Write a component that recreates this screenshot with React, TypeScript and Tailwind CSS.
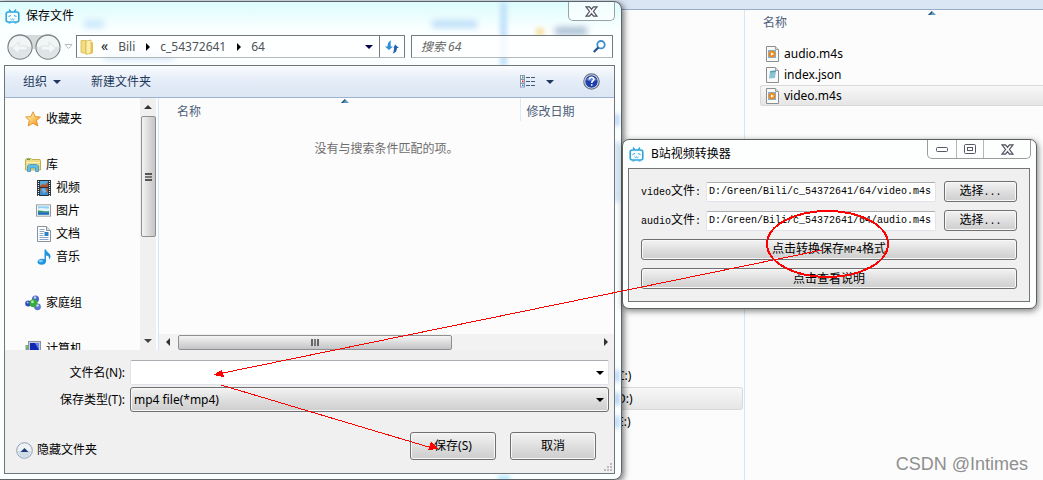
import React from "react";

interface NavItem {
  label: string;
  icon: React.ReactNode;
  child?: boolean;
  spaced?: boolean;
}

interface FileRow {
  name: string;
  kind: "media" | "json";
  selected?: boolean;
}

const TvIcon = () => (
  <svg width="15" height="15" viewBox="0 0 15 15" fill="none" stroke="#2fa5dc" aria-hidden="true">
    <path d="M4 0.5 6 3M11 0.5 9 3" strokeWidth="1.4" />
    <rect x="1.2" y="3" width="12.6" height="10" rx="2" strokeWidth="1.6" fill="#f4fcff" />
    <path d="M3.5 7.5 6 6.5M9 6.5l2.500 1M5.500 10l1 .8 1-.8 1 .8 1-.8M3.500 14h2M9.500 14h2" strokeWidth="1" />
  </svg>
);

const StarIcon = () => (
  <svg width="16" height="16" viewBox="0 0 16 16" aria-hidden="true">
    <defs>
      <linearGradient id="star" x1="0" y1="0" x2="1" y2="1">
        <stop offset="0.2" stopColor="#fff0a0" />
        <stop offset="1" stopColor="#f08a10" />
      </linearGradient>
    </defs>
    <path
      d="M8 .8 10.200 5.600 15.400 6 11.500 9.600 12.800 15 8 12.200 3.200 15 4.300 9.600.6 6l5.200-.4z"
      fill="url(#star)"
      stroke="#e68a28"
      strokeWidth="0.9"
    />
  </svg>
);

const LibraryIcon = () => (
  <svg width="16" height="16" viewBox="0 0 16 16" aria-hidden="true">
    <path d="M.5 13V2.500L2 1.500h4l1 1h8l.5 1V13z" fill="#eedc84" stroke="#c5ad4c" />
    <path d="M1 5.500h14" stroke="#fbf3b8" />
    <path d="M2.500 14.500V9l2-1.500h7l2 1.500v5.500h-3V11h-5v3.500z" fill="#62bce8" stroke="#3d93c4" strokeWidth="0.8" />
    <path d="M2 2.500h3" stroke="#4ca44a" />
  </svg>
);

const FilmIcon = () => (
  <svg width="14" height="16" viewBox="0 0 14 16" aria-hidden="true">
    <rect width="14" height="16" fill="#2a3136" />
    <rect x="3" y="1" width="8" height="6" fill="#57a8dc" />
    <rect x="3" y="8" width="8" height="7" fill="#3c8fd0" />
    <path d="m3 6 3-2 2 1 3-3v5H3zM3 8l4 2 4-2v4l-3 1-5-3z" fill="#b5502f" />
    <path d="M4 9.500 7 8l3 3-3 2.500z" fill="#63b9ee" />
    <path d="M1.500 1v15M12.500 1v15" stroke="#e3f2f2" strokeWidth="1.2" strokeDasharray="1 1" />
  </svg>
);

const PictureIcon = () => (
  <svg width="16" height="13" viewBox="0 0 16 13" aria-hidden="true">
    <rect x=".5" y=".5" width="15" height="12" fill="#fff" stroke="#8d969b" />
    <rect x="2" y="2" width="12" height="9" fill="#8fd0f3" />
    <path d="M2 4.500c4-2 8 1 12-.5v3H2z" fill="#e4f6fb" />
    <path d="M2 6.500c4-.5 8 2 12 .5V8.500H2z" fill="#3e9262" />
    <path d="M2 8.500h12V11H2z" fill="#1f6bb5" />
  </svg>
);

const DocumentIcon = () => (
  <svg width="14" height="16" viewBox="0 0 14 16" aria-hidden="true">
    <path d="M.5.5h9l4 4v11H.5z" fill="#fff" stroke="#8a9299" />
    <path d="M9.500.5v4h4" fill="#dfe6ea" stroke="#8a9299" />
    <path d="M2.500 3.500h5M2.500 5.500h5M2.500 7.500h4M2.500 9.500h4M2.500 11.500h9M2.500 13.500h9" stroke="#8ba6c9" />
    <rect x="7.500" y="6" width="4" height="4" fill="#2e7fc2" />
  </svg>
);

const MusicIcon = () => (
  <svg width="14" height="16" viewBox="0 0 14 16" aria-hidden="true">
    <path d="M7.500.5h1.500c.5 3 4.500 3.500 4.500 7 0 1.500-.8 2.500-1.500 3 .5-3-1-3.800-3-4v6c0 2-2 3.300-4.300 3.300C2 15.800.5 14.600.5 13c0-2 2-3.300 4.500-3.300 1 0 2 .2 2.500.5z" fill="#2196dc" />
    <ellipse cx="3.800" cy="12" rx="2" ry="1.200" fill="#7fd0f8" />
  </svg>
);

const HomegroupIcon = () => (
  <svg width="16" height="16" viewBox="0 0 16 16" aria-hidden="true">
    <circle cx="10.500" cy="4" r="3.500" fill="#4a66c4" />
    <circle cx="3.200" cy="8.500" r="3" fill="#2f4cb4" />
    <circle cx="12.500" cy="11.800" r="3.400" fill="#5a76cc" />
    <circle cx="8.500" cy="8.300" r="4" fill="#35a93c" />
    <circle cx="10" cy="2.600" r="1.300" fill="#b8c8f4" />
    <circle cx="7.500" cy="6.800" r="1.500" fill="#a6e69a" />
    <circle cx="12.500" cy="10.600" r="1.300" fill="#bccaf2" />
    <circle cx="2.600" cy="7.400" r="1" fill="#aebcf0" />
  </svg>
);

const ComputerIcon = () => (
  <svg width="16" height="16" viewBox="0 0 16 16" aria-hidden="true">
    <rect x=".5" y="4" width="3" height="10" fill="#8b979b" />
    <path d="M1 6h2" stroke="#55d34c" strokeWidth="2" />
    <rect x="3.500" y=".5" width="12" height="10" fill="#c9ced6" stroke="#8c939c" />
    <rect x="5" y="2" width="9" height="7" fill="#1028b4" />
    <path d="M10 2h4v7z" fill="#5f86f0" />
    <path d="M6 13h8" stroke="#8c939c" strokeWidth="2" />
  </svg>
);

const FolderIcon = () => (
  <svg width="14" height="16" viewBox="0 0 14 16" aria-hidden="true">
    <path d="M1 1.500h5v13l-5-1z" fill="#f3dc82" stroke="#d9b84e" strokeWidth="0.800" />
    <path d="m6 2 5-1v13l-5 1.500z" fill="#fbeeaf" stroke="#d9b84e" strokeWidth="0.800" />
    <path d="M11 3.500 13 3v11l-4 1.500 2-3z" fill="#e8c24c" />
  </svg>
);

const FileIcon = ({ kind }: { kind: "media" | "json" }) => (
  <svg width="13" height="16" viewBox="0 0 13 16" aria-hidden="true">
    <path d="M.5.5h9l3 3v12H.5z" fill="#fafafa" stroke="#8d8d8d" />
    <path d="M9.500.5v3h3" fill="#e1e1e1" stroke="#a0a0a0" />
    {kind === "media" ? (
      <>
        <rect x="2" y="4" width="8" height="8" fill="#7fb2dc" />
        <circle cx="6" cy="8" r="3.500" fill="#f08a1c" />
        <path d="M5 6.200v3.600L8 8z" fill="#fff" />
      </>
    ) : (
      <>
        <path d="m4 4 6-.5L9 11l-6 .5z" fill="#8cc4d4" />
        <path d="m4.300 4 5.700-.5-.2 1.500-5.800.6z" fill="#4f9eb4" />
      </>
    )}
  </svg>
);

const Caret = ({ color = "#000" }: { color?: string }) => (
  <svg width="8" height="4" viewBox="0 0 8 4" fill={color} aria-hidden="true">
    <path d="M0 0h8L4 4z" />
  </svg>
);

const SortArrow = () => (
  <svg width="8" height="4" viewBox="0 0 8 4" aria-hidden="true">
    <path d="M0 4 4 0l4 4z" fill="#5a9cc0" />
    <path d="M0 4 4 0v1.500L2 4z" fill="#244c66" />
  </svg>
);

const CloseIcon = () => (
  <svg width="13" height="11" viewBox="0 0 13 11" aria-hidden="true">
    <path
      d="M1 .8h3.500l2 2.400 2-2.400H12L8.500 5.500l3.500 4.700H8.500l-2-2.400-2 2.400H1l3.500-4.700z"
      fill="#f7f7f7"
      stroke="#4f5260"
      strokeWidth="1.200"
    />
  </svg>
);

const navItems: NavItem[] = [
  { label: "收藏夹", icon: <StarIcon />, spaced: true },
  { label: "库", icon: <LibraryIcon /> },
  { label: "视频", icon: <FilmIcon />, child: true },
  { label: "图片", icon: <PictureIcon />, child: true },
  { label: "文档", icon: <DocumentIcon />, child: true },
  { label: "音乐", icon: <MusicIcon />, child: true, spaced: true },
  { label: "家庭组", icon: <HomegroupIcon />, spaced: true },
  { label: "计算机", icon: <ComputerIcon /> },
];

const files: FileRow[] = [
  { name: "audio.m4s", kind: "media" },
  { name: "index.json", kind: "json" },
  { name: "video.m4s", kind: "media", selected: true },
];

const drives = [
  { label: "C:)", selected: false },
  { label: "D:)", selected: true },
  { label: "E:)", selected: false },
];

const classicButton =
  "rounded-[3px] border border-[#707070] bg-linear-to-b from-[#f3f3f3] from-0% via-[#dddddd] via-55% to-[#cecece] shadow-[inset_0_0_0_1px_#f8f8f8]";

function Explorer() {
  return (
    <div className="flex min-h-screen flex-col bg-[#fcfcfc]">
      <div className="h-[10px] border-b border-[#9aabca] bg-[#dbe6f4]" />
      <div className="flex flex-1">
        <ul className="w-[744px] pt-[354px]">
          {drives.map((drive) => (
            <li
              key={drive.label}
              className={`mr-px flex h-[23px] items-center rounded-[3px] border pl-[616px] ${
                drive.selected
                  ? "border-[#d9d9d9] bg-linear-to-b from-[#f8f8f8] to-[#e5e5e5]"
                  : "border-transparent"
              }`}
            >
              {drive.label}
            </li>
          ))}
        </ul>
        <div className="flex-1 border-l border-[#d6e5f5] pt-px">
          <table className="w-full text-left">
            <thead>
              <tr>
                <th className="pl-[18px] font-normal text-[#4c607a]">
                  <div className="flex justify-center pr-5">
                    <span className="ml-[78px]">
                      <SortArrow />
                    </span>
                  </div>
                  <div className="pb-3 leading-4">名称</div>
                </th>
              </tr>
            </thead>
            <tbody>
              {files.map((file) => (
                <tr key={file.name}>
                  <td className="p-0 pl-[15px]">
                    <div
                      className={`flex h-[21px] items-center gap-[5px] rounded-l-[3px] border border-r-0 pl-[5px] ${
                        file.selected
                          ? "border-[#d9d9d9] bg-linear-to-b from-[#f8f8f8] to-[#e5e5e5]"
                          : "border-transparent"
                      }`}
                    >
                      <FileIcon kind={file.kind} />
                      {file.name}
                    </div>
                  </td>
                </tr>
              ))}
            </tbody>
          </table>
        </div>
      </div>
    </div>
  );
}

// blurred shapes that shine through the glass frame
function GlassFrame() {
  return (
    <div className="pointer-events-none absolute inset-0 overflow-hidden rounded-r-[7px]" aria-hidden="true">
      <div className="absolute left-[84px] top-[18px] h-2 w-5 bg-[#cbe6fa] blur-[3px]" />
      <div className="absolute left-[104px] top-[50px] h-2 w-[70px] bg-[#d4e3f8] blur-[3px]" />
      <div className="absolute left-[432px] top-[18px] h-2 w-[45px] bg-[#bfdff8] blur-[3px]" />
      <div className="absolute left-[500px] top-0 h-[64px] w-[7px] bg-[#c2e2fa] blur-[2px]" />
      <div className="absolute left-[536px] top-[26px] h-2 w-2 bg-[#f7e3a8] blur-[2px]" />
      <div className="absolute left-[555px] top-[25px] h-2 w-[32px] bg-[#a9bfd3] blur-[3px]" />
      <div className="absolute left-[615px] top-[112px] h-3 w-1 bg-[#a9cdf2] blur-[2px]" />
      <div className="absolute left-[615px] top-[140px] h-[60px] w-1 bg-[#bfdaf2] blur-[2px]" />
      <div className="absolute left-[615px] top-[368px] h-3 w-1 bg-[#a5cdf8] blur-[2px]" />
      <div className="absolute left-[615px] top-[391px] h-3 w-1 bg-[#9cc3f0] blur-[2px]" />
      <div className="absolute left-[615px] top-[414px] h-3 w-1 bg-[#a5cdf8] blur-[2px]" />
      <div className="absolute left-[498px] top-[474px] h-1 w-3 bg-[#9ce0fc] blur-[2px]" />
    </div>
  );
}

function AddressRow() {
  return (
    <div className="flex h-[27px] items-center pl-[6px] pr-[2px]">
      <svg width="56" height="28" viewBox="0 0 56 28" aria-hidden="true">
        <path d="M14 2h28l8 6-8 8H14L6 8z" fill="#d5d9da" />
        <g fill="#f2f5f6" stroke="#7c8487" strokeWidth="1.300">
          <circle cx="14" cy="14" r="12" />
          <circle cx="42" cy="14" r="12" />
        </g>
        <path d="M2.500 14a11.500 11.500 0 0 0 23 0zM30.500 14a11.500 11.500 0 0 0 23 0z" fill="#dfe4e6" />
        <path
          d="m6 15 7-6v4h8v4h-8v4zM50 15l-7-6v4h-8v4h8v4z"
          fill="#f4f6f7"
          stroke="#d9dee0"
          strokeWidth="0.800"
        />
      </svg>
      <svg className="ml-[2px]" width="9" height="6" viewBox="0 0 9 6" aria-hidden="true">
        <path d="M1 .5h7l-3.500 4z" fill="#fff" stroke="#b5bcc0" />
      </svg>
      <nav className="ml-[3px] flex h-[23px] flex-1 items-center border border-[#75797c] border-b-[#b4b8ba] bg-white/80 text-[#4d5358]">
        <span className="ml-[3px]">
          <FolderIcon />
        </span>
        <span className="ml-[7px] text-[14px] text-[#222]">«</span>
        <a href="#bili" className="ml-[10px]">
          Bili
        </a>
        <span className="ml-[11px]">
          <svg width="4" height="8" viewBox="0 0 4 8" aria-hidden="true">
            <path d="M0 0v8l4-4z" />
          </svg>
        </span>
        <a href="#c" className="ml-[10px]">
          c_54372641
        </a>
        <span className="ml-[11px]">
          <svg width="4" height="8" viewBox="0 0 4 8" aria-hidden="true">
            <path d="M0 0v8l4-4z" />
          </svg>
        </span>
        <a href="#64" className="ml-[10px]">
          64
        </a>
        <button type="button" aria-label="历史记录" className="ml-auto mr-[6px]">
          <Caret color="#00004c" />
        </button>
        <button
          type="button"
          aria-label="刷新"
          className="flex h-full w-[25px] items-center justify-center border-l border-[#75797c]"
        >
          <svg width="14" height="14" viewBox="0 0 14 14" aria-hidden="true">
            <path d="M0 6.500h2.500C2.500 3.500 3.500 1.500 6 .5 5.500 2.500 5.500 4.500 5.800 6.500H8L4 10z" fill="#2d8fd5" />
            <path d="M6 8h2.500l1.500-3.500L14 8h-2c0 3-1.500 5-4.500 5.500C8.800 12 9 10 9 8z" fill="#2560ae" />
          </svg>
        </button>
      </nav>
      <div className="ml-[6px] flex h-[23px] w-[202px] items-center border border-[#75797c] border-b-[#b4b8ba] bg-white/80 px-[6px]">
        <input
          type="text"
          aria-label="搜索"
          placeholder="搜索 64"
          className="min-w-0 flex-1 bg-transparent pl-[3px] italic outline-none placeholder:text-[#666]"
        />
        <svg width="13" height="13" viewBox="0 0 13 13" fill="none" aria-hidden="true">
          <circle cx="8" cy="4.700" r="3.700" stroke="#3d8ec9" strokeWidth="1.800" />
          <path d="M5.300 7.500.8 12" stroke="#1f4f93" strokeWidth="2.200" />
        </svg>
      </div>
    </div>
  );
}

function Toolbar() {
  return (
    <div className="flex h-8 items-center border-b border-[#9fb3cf] bg-linear-to-b from-[#fafcfe] from-0% via-[#e5edf8] via-45% to-[#dbe6f4] pl-[18px] pr-[14px] text-[#1e395b]">
      <button type="button" className="flex items-center gap-[6px]">
        组织
        <Caret color="#1e395b" />
      </button>
      <button type="button" className="ml-[30px]">
        新建文件夹
      </button>
      <button type="button" aria-label="视图" className="ml-auto flex items-center gap-[10px]">
        <svg width="16" height="13" viewBox="0 0 16 13" aria-hidden="true">
          <g fill="#fff" stroke="#8498b4">
            <rect x=".5" y=".5" width="4" height="3.500" />
            <rect x=".5" y="4.500" width="4" height="3.500" />
            <rect x=".5" y="8.500" width="4" height="3.500" />
          </g>
          <path d="M2 2.300h1.500" stroke="#3a9a42" strokeWidth="1.500" />
          <path d="M2 6.300h1.500" stroke="#e02020" strokeWidth="1.500" />
          <path d="M2 10.300h1.500" stroke="#2c6fd0" strokeWidth="1.500" />
          <path d="M6 2.500h4M11 2.500h4M6 6.500h4M11 6.500h4M6 10.500h4M11 10.500h4" stroke="#44597a" />
        </svg>
        <Caret color="#1e395b" />
      </button>
      <button type="button" aria-label="帮助" className="ml-[29px]">
        <svg width="17" height="17" viewBox="0 0 17 17" aria-hidden="true">
          <circle cx="8.500" cy="8.500" r="7.700" fill="#e4e8ee" stroke="#6b7584" strokeWidth="1.200" />
          <circle cx="8.500" cy="8.500" r="6.200" fill="#1d3eaa" />
          <path d="M3 7a6 5 0 0 1 11 0 12 8 0 0 1-11 0z" fill="#5f7fd8" />
          <path
            d="M6.300 6.600c0-3 4.600-3 4.600-.3 0 1.600-2.200 1.700-2.200 3.600M8.700 11.200v1.600"
            fill="none"
            stroke="#fff"
            strokeWidth="1.600"
          />
        </svg>
      </button>
    </div>
  );
}

function Sidebar() {
  return (
    <div className="flex w-[154px] border-r border-[#d6e5f5]">
      <ul className="flex-1 overflow-hidden pt-[9px]">
        {navItems.map((item) => (
          <li
            key={item.label}
            className={`flex h-[23px] items-center gap-[5px] ${item.child ? "pl-[31px]" : "pl-5"} ${
              item.spaced ? "mb-[23px]" : ""
            }`}
          >
            <span className={`flex justify-center ${item.child ? "w-[15px]" : "w-4"}`}>{item.icon}</span>
            {item.label}
          </li>
        ))}
      </ul>
      <div className="mr-[2px] flex w-4 flex-col items-center bg-[#f0f0f0] pb-[7px] pt-[7px]">
        <svg width="8" height="4" viewBox="0 0 8 4" aria-hidden="true">
          <path d="M0 4 4 0l4 4z" fill="#333" />
        </svg>
        <div className="mt-[7px] flex h-[121px] w-[15px] flex-col items-center justify-center gap-px rounded-[2px] border border-[#8f8f8f] bg-linear-to-r from-[#f4f4f4] via-[#dcdcdc] to-[#c4c4c8]">
          <i className="h-[2px] w-[7px] bg-[#555]" />
          <i className="h-[2px] w-[7px] bg-[#777]" />
          <i className="h-[2px] w-[7px] bg-[#555]" />
        </div>
        <span className="mt-auto">
          <svg width="8" height="4" viewBox="0 0 8 4" aria-hidden="true">
            <path d="M0 0h8L4 4z" fill="#444" />
          </svg>
        </span>
      </div>
    </div>
  );
}

function FileList() {
  return (
    <div className="flex min-w-0 flex-1 flex-col">
      <table className="w-full table-fixed text-left">
        <thead>
          <tr className="text-[#4c607a]">
            <th className="h-[23px] w-[361px] border-r border-[#dfe9f3] p-0 align-top font-normal">
              <div className="flex justify-center pt-px">
                <span className="ml-3">
                  <SortArrow />
                </span>
              </div>
              <div className="pl-[18px] pt-px leading-4">名称</div>
            </th>
            <th className="p-0 pl-[6px] pt-[6px] align-top font-normal leading-4">修改日期</th>
          </tr>
        </thead>
        <tbody>
          <tr>
            <td colSpan={2} className="pt-5 text-center text-[#6d6d6d]">
              没有与搜索条件匹配的项。
            </td>
          </tr>
        </tbody>
      </table>
      <div className="mt-auto flex h-4 items-center bg-[#f2f2f2] pl-[7px] pr-[6px]">
        <svg width="4" height="8" viewBox="0 0 4 8" aria-hidden="true">
          <path d="M4 0v8L0 4z" fill="#333" />
        </svg>
        <div className="ml-2 flex h-[15px] w-[274px] items-center justify-center gap-px rounded-[2px] border border-[#8f8f8f] bg-linear-to-b from-[#f4f4f4] via-[#dcdcdc] to-[#c4c4c8]">
          <i className="h-[7px] w-[2px] bg-[#666]" />
          <i className="h-[7px] w-[2px] bg-[#777]" />
          <i className="h-[7px] w-[2px] bg-[#666]" />
        </div>
        <span className="ml-auto">
          <svg width="4" height="8" viewBox="0 0 4 8" aria-hidden="true">
            <path d="M0 0v8l4-4z" fill="#333" />
          </svg>
        </span>
      </div>
    </div>
  );
}

function DialogFooter() {
  return (
    <div className="relative bg-[#f0f0f0] pb-[13px] pr-[5px] pt-[10px]">
      <div className="flex items-center">
        <label htmlFor="file-name" className="w-[120px] text-right">
          文件名(N):
        </label>
        <div className="relative ml-[5px] flex-1">
          <input
            id="file-name"
            type="text"
            className="block h-[25px] w-full rounded-[2px] border border-[#e2e3ea] border-t-[#abadb3] bg-white px-1 outline-none"
          />
          <span className="absolute right-[5px] top-[11px]">
            <Caret />
          </span>
        </div>
      </div>
      <div className="mt-[2px] flex items-center">
        <label htmlFor="file-type" className="w-[120px] text-right">
          保存类型(T):
        </label>
        <div className="relative ml-[5px] flex-1">
          <select
            id="file-type"
            className={`block h-[25px] w-full appearance-none px-[3px] outline-none ${classicButton}`}
          >
            <option>mp4 file(*mp4)</option>
          </select>
          <span className="pointer-events-none absolute right-[5px] top-[11px]">
            <Caret />
          </span>
        </div>
      </div>
      <div className="mt-5 flex items-center pl-[11px] pr-[13px]">
        <button type="button" className="mt-2 flex items-center gap-1">
          <svg width="17" height="17" viewBox="0 0 17 17" aria-hidden="true">
            <circle cx="8.500" cy="8.500" r="7.800" fill="#eef2f6" stroke="#8d9db3" />
            <path d="M2 9a6.500 6.500 0 0 0 13 0z" fill="#cfdbe6" />
            <path d="m4.500 10 4-4 4 4z" fill="#1e3c78" />
          </svg>
          隐藏文件夹
        </button>
        <button type="button" className={`ml-auto h-7 w-[86px] ${classicButton}`}>
          保存(S)
        </button>
        <button type="button" className={`ml-[14px] h-7 w-[86px] ${classicButton}`}>
          取消
        </button>
      </div>
      <svg className="absolute bottom-px right-[2px]" width="10" height="10" viewBox="0 0 10 10" aria-hidden="true">
        <path d="M8 1h2v2H8zM8 4h2v2H8zM8 7h2v2H8zM5 4h2v2H5zM5 7h2v2H5zM2 7h2v2H2z" fill="#bdbdbd" />
      </svg>
    </div>
  );
}

function SaveDialog() {
  return (
    <section className="absolute left-0 top-px w-[622px] rounded-r-[8px] border border-l-0 border-[#5c6469] bg-linear-to-b from-[#dcfcfd] from-0% via-[#fbffff] via-6% to-[#fbffff] pb-[5px] pl-1 pr-[6px] shadow-[2px_2px_6px_rgba(0,0,0,0.55)]">
      <GlassFrame />
      <div className="relative">
        <header className="flex h-[31px] items-start justify-between">
          <h1 className="flex items-center gap-[6px] pl-px pt-[5px] leading-[18px]">
            <TvIcon />
            保存文件
          </h1>
          <button
            type="button"
            aria-label="关闭"
            className="flex h-[19px] w-[47px] items-center justify-center rounded-b-[5px] border border-t-0 border-[#98a3a6] bg-white/60"
          >
            <CloseIcon />
          </button>
        </header>
        <div className="-ml-1">
          <AddressRow />
        </div>
        <div className="mt-[5px] border border-[#6f7679]">
          <Toolbar />
          <div className="flex h-[252px] bg-[#fcfcfc]">
            <Sidebar />
            <FileList />
          </div>
          <DialogFooter />
        </div>
      </div>
    </section>
  );
}

const mono = "font-['Liberation_Mono',monospace] text-[10px]";

function PathField(props: { id: string; name: string; path: string }) {
  const { id, name, path } = props;
  return (
    <div className="flex h-[21px] items-center">
      <label htmlFor={id} className="w-[65px]">
        <span className={mono}>{name}</span>文件<span className={mono}>:</span>
      </label>
      <input
        id={id}
        type="text"
        defaultValue={path}
        className={`h-5 min-w-0 flex-1 rounded-[2px] border border-[#e2e3ea] border-t-[#abadb3] bg-white px-[2px] outline-none ${mono}`}
      />
      <button type="button" className={`ml-2 h-[21px] w-[73px] leading-4 ${classicButton}`}>
        选择<span className={mono}>...</span>
      </button>
    </div>
  );
}

function Converter() {
  return (
    <section className="absolute left-[622px] top-[139px] w-[415px] rounded-[7px] border border-[#5f5f5f] bg-[#fdffff] px-[5px] pb-[6px] shadow-[1px_2px_6px_rgba(0,0,0,0.5)]">
      <header className="flex h-7 items-start justify-between">
        <h2 className="flex items-center gap-[7px] pl-px pt-[5px] leading-[18px]">
          <TvIcon />
          B站视频转换器
        </h2>
        <div className="flex h-[19px] rounded-b-[5px] border border-t-0 border-[#9b9b9b]">
          <button type="button" aria-label="最小化" className="flex w-7 items-center justify-center">
            <svg width="12" height="5" viewBox="0 0 12 5" aria-hidden="true">
              <rect x=".5" y=".5" width="11" height="4" rx="1" fill="#fff" stroke="#555866" />
            </svg>
          </button>
          <button
            type="button"
            aria-label="最大化"
            className="flex w-7 items-center justify-center border-x border-[#b5b5b5]"
          >
            <svg width="12" height="10" viewBox="0 0 12 10" fill="#fff" stroke="#555866" aria-hidden="true">
              <rect x=".5" y=".5" width="11" height="9" rx="1" />
              <rect x="3.500" y="3.500" width="5" height="3" />
            </svg>
          </button>
          <button type="button" aria-label="关闭窗口" className="flex w-[46px] items-center justify-center">
            <CloseIcon />
          </button>
        </div>
      </header>
      <div className="mr-px flex flex-col gap-2 border border-[#757575] bg-[#f0f0f0] p-3">
        <PathField id="video-path" name="video" path="D:/Green/Bili/c_54372641/64/video.m4s" />
        <PathField id="audio-path" name="audio" path="D:/Green/Bili/c_54372641/64/audio.m4s" />
        <button type="button" className={`h-[21px] leading-4 ${classicButton}`}>
          点击转换保存<span className={mono}>MP4</span>格式
        </button>
        <button type="button" className={`h-[21px] leading-4 ${classicButton}`}>
          点击查看说明
        </button>
      </div>
    </section>
  );
}

// red marks drawn over both windows
function Annotations() {
  return (
    <svg
      className="pointer-events-none absolute left-0 top-0"
      width="1043"
      height="480"
      viewBox="0 0 1043 480"
      fill="none"
      stroke="#f00"
      shapeRendering="crispEdges"
      aria-hidden="true"
    >
      <ellipse cx="827.500" cy="244" rx="60.500" ry="33" strokeWidth="2" />
      <path d="M822 250 218 374M221 385 432 448" />
      <path d="m213 375 9-5 2 7zM438 449l-7-7-3 8z" fill="#f00" stroke="none" />
    </svg>
  );
}

function App() {
  return (
    <main className="relative min-h-screen w-full overflow-hidden font-['Noto_Sans','Noto_Sans_CJK_SC',sans-serif] text-xs text-black">
      <Explorer />
      <SaveDialog />
      <Converter />
      <Annotations />
      <p className="absolute bottom-1 right-[15px] font-['Liberation_Sans',sans-serif] text-lg leading-6 text-[#8f8f8f]">
        CSDN @Intimes
      </p>
    </main>
  );
}

export default App;
